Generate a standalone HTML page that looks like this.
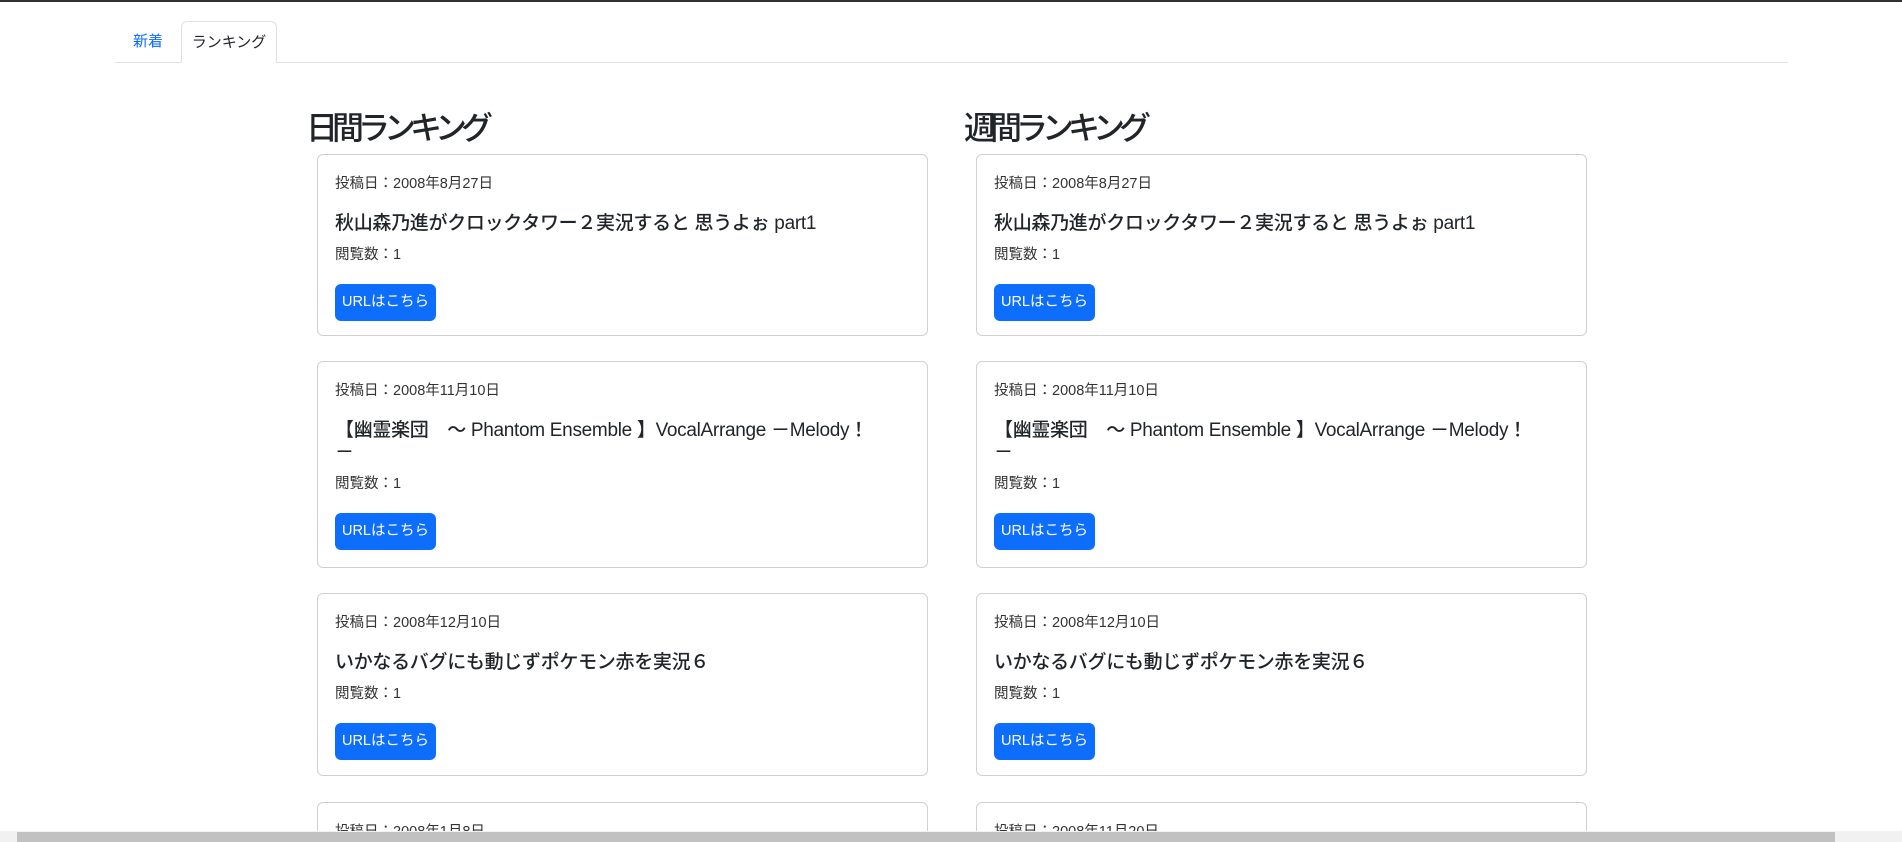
<!DOCTYPE html>
<html><head><meta charset="utf-8"><style>
*{box-sizing:border-box;margin:0;padding:0}
html,body{width:1902px;height:842px;overflow:hidden;background:#fff}
body{font-family:"Liberation Sans","Noto Sans CJK JP",sans-serif;color:#212529;position:relative}
.topline{position:absolute;left:0;top:0;width:1902px;height:2px;background:#333}
.nav{position:absolute;left:115px;top:21px;width:1673px;height:42px;border-bottom:1px solid #dee2e6}
.tab{position:absolute;top:0;height:42px;font-size:15px;line-height:42px}
.t1{left:18px;color:#0d6efd}
.t2{left:66px;width:96px;text-align:center;border:1px solid #dee2e6;border-bottom:1px solid #fff;border-radius:6px 6px 0 0;height:42px;background:#fff}
.col{position:absolute;top:0}
h2{position:absolute;top:106px;font-size:32px;font-weight:500;line-height:44px;white-space:nowrap;letter-spacing:-6px}
.card{position:absolute;width:611px;border:1px solid #d0d0d0;border-radius:6px;padding:17px 17px;background:#fff}
.d{font-size:14.5px;line-height:24px;height:24px;color:#333}
.ti{font-size:19px;line-height:22px;margin-top:17px;font-weight:500;letter-spacing:-0.3px;white-space:nowrap}
.v{font-size:14.5px;line-height:24px;margin-top:8px;color:#333}
.b{margin-top:17px;width:101px;height:37px;background:#0d6efd;color:#fff;border-radius:6px;font-size:14.5px;line-height:37px;text-align:center}
.sb{position:absolute;left:0;top:831px;width:1902px;height:11px;background:#f1f1f1}
.th{position:absolute;left:17px;top:1px;width:1818px;height:10px;background:#c1c1c1}
</style></head><body>
<div class="topline"></div>
<div class="nav"><div class="tab t1">新着</div><div class="tab t2">ランキング</div></div>

<div class="col" style="left:306px">
<h2 style="left:0">日間ランキング</h2>
<div class="card" style="left:11px;top:154px;height:182px"><div class="d">投稿日：2008年8月27日</div><div class="ti">秋山森乃進がクロックタワー２実況すると 思うよぉ part1</div><div class="v">閲覧数：1</div><div class="b">URLはこちら</div></div>
<div class="card" style="left:11px;top:361px;height:207px"><div class="d">投稿日：2008年11月10日</div><div class="ti">【幽霊楽団　～ Phantom Ensemble 】VocalArrange －Melody！<br>－</div><div class="v">閲覧数：1</div><div class="b">URLはこちら</div></div>
<div class="card" style="left:11px;top:593px;height:183px"><div class="d">投稿日：2008年12月10日</div><div class="ti">いかなるバグにも動じずポケモン赤を実況６</div><div class="v">閲覧数：1</div><div class="b">URLはこちら</div></div>
<div class="card" style="left:11px;top:802px;height:183px"><div class="d">投稿日：2008年1月8日</div></div>
</div>

<div class="col" style="left:964px">
<h2 style="left:0">週間ランキング</h2>
<div class="card" style="left:12px;top:154px;height:182px"><div class="d">投稿日：2008年8月27日</div><div class="ti">秋山森乃進がクロックタワー２実況すると 思うよぉ part1</div><div class="v">閲覧数：1</div><div class="b">URLはこちら</div></div>
<div class="card" style="left:12px;top:361px;height:207px"><div class="d">投稿日：2008年11月10日</div><div class="ti">【幽霊楽団　～ Phantom Ensemble 】VocalArrange －Melody！<br>－</div><div class="v">閲覧数：1</div><div class="b">URLはこちら</div></div>
<div class="card" style="left:12px;top:593px;height:183px"><div class="d">投稿日：2008年12月10日</div><div class="ti">いかなるバグにも動じずポケモン赤を実況６</div><div class="v">閲覧数：1</div><div class="b">URLはこちら</div></div>
<div class="card" style="left:12px;top:802px;height:183px"><div class="d">投稿日：2008年11月20日</div></div>
</div>

<div class="sb"><div class="th"></div></div>
</body></html>
